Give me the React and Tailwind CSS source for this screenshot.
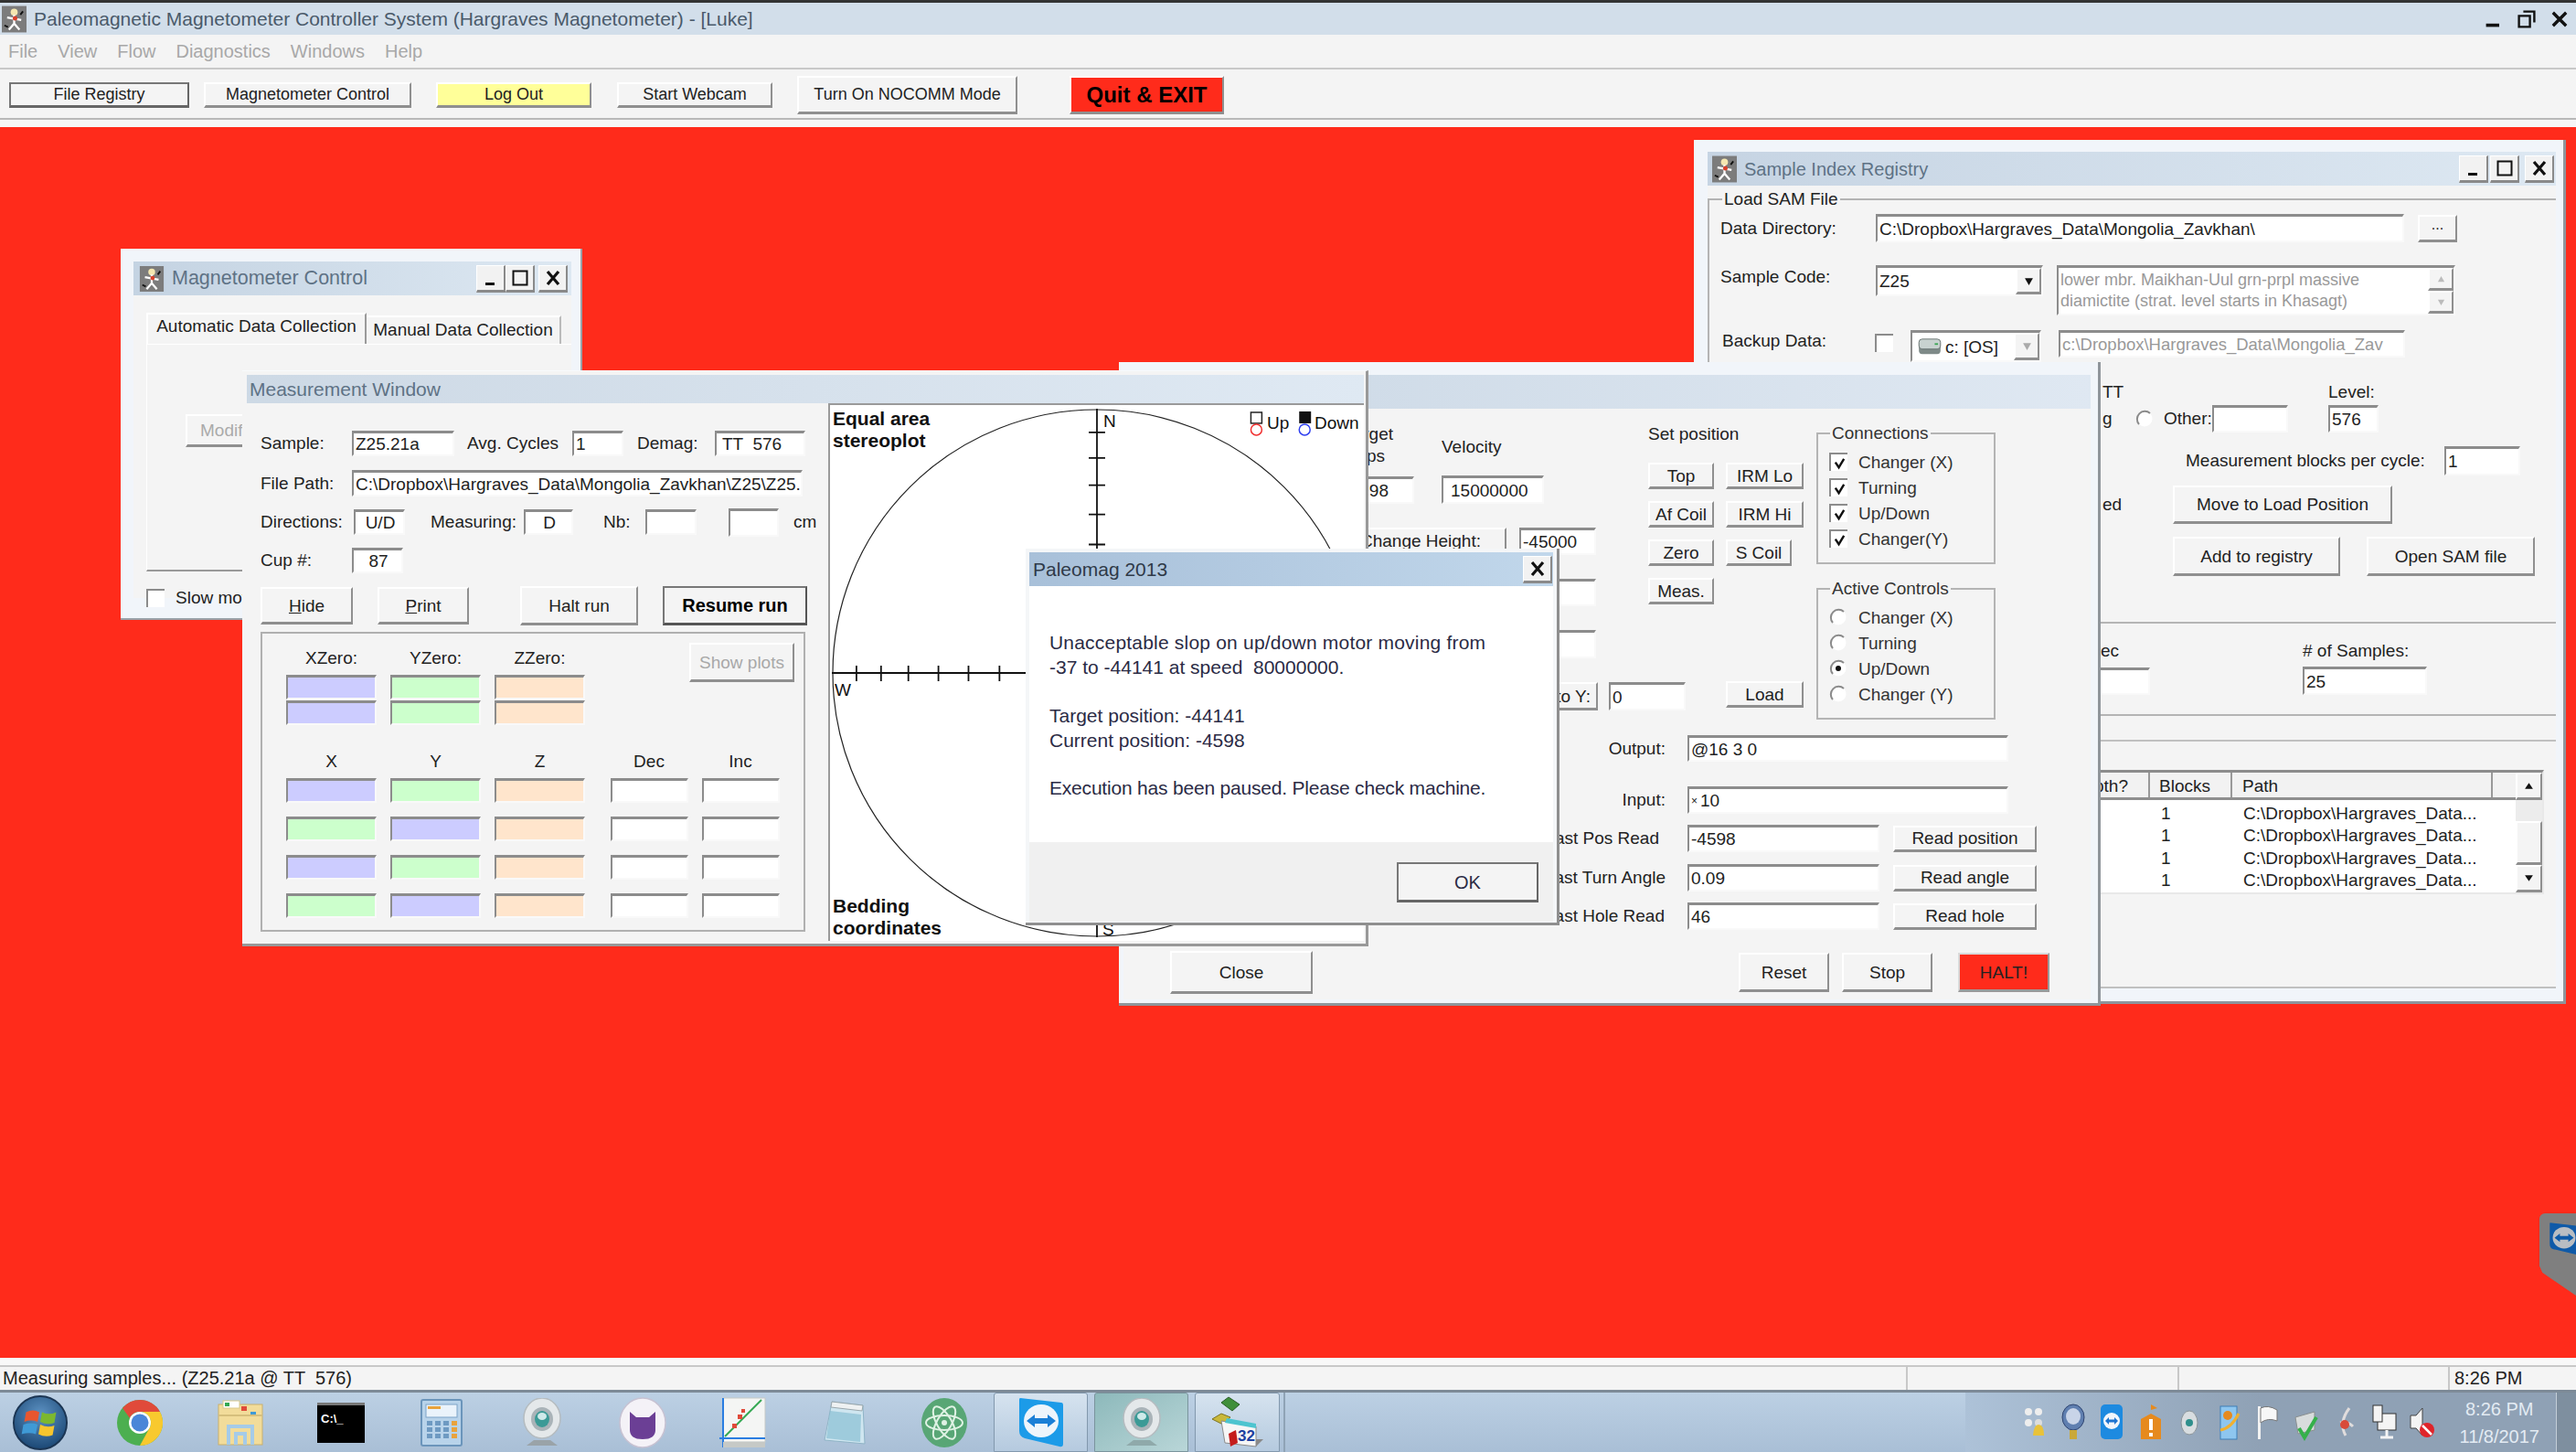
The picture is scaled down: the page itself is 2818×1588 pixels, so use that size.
import React from 'react';
import { twMerge } from 'tailwind-merge';

const Field = ({ className, children }) => (
  <div className={twMerge('flex items-center shrink-0 bg-white border-t-[3px] border-l-2 border-t-[#8c8c8c] border-l-[#8c8c8c] border-r-2 border-b-2 border-r-[#f9f9f9] border-b-[#f9f9f9] overflow-hidden whitespace-pre pl-[2px] text-[19px] leading-none text-[#222]', className)}>
    {children}
  </div>
);

const Btn = ({ className, children }) => (
  <div className={twMerge('flex items-center justify-center shrink-0 bg-[#f4f4f4] border-t-2 border-l-2 border-t-white border-l-white border-r-2 border-b-[3px] border-r-[#8f8f8f] border-b-[#8f8f8f] whitespace-nowrap text-[19px] leading-none text-[#222]', className)}>
    {children}
  </div>
);

const Label = ({ className, children }) => (
  <div className={twMerge('shrink-0 whitespace-nowrap text-[19px] leading-[24px] text-[#222]', className)}>{children}</div>
);

const AppIcon = ({ className }) => (
  <svg viewBox="0 0 28 30" className={className}>
    <rect width="28" height="30" fill="#7c7c7c" />
    <circle cx="14" cy="7" r="4" fill="#f4e7b0" />
    <path d="M14 10 L14 20 L8 27 M14 20 L20 27 M6 13 L22 16" stroke="#fff" strokeWidth="2.4" fill="none" />
    <circle cx="15" cy="14" r="2.6" fill="#d8402a" />
    <path d="M3 22 L7 24 M24 6 L21 10" stroke="#111" strokeWidth="2" />
  </svg>
);

const Caption = ({ kind }) => (
  <div className="flex items-center justify-center w-[32px] h-[30px] bg-[#f2f2f2] border-t border-l border-white border-r-2 border-b-[3px] border-r-[#8a8a8a] border-b-[#8a8a8a]">
    <svg viewBox="0 0 20 20" className="w-[20px] h-[20px]">
      {kind === 'min' && <rect x="4" y="15" width="10" height="3" fill="#111" />}
      {kind === 'max' && <rect x="2.5" y="2.5" width="15" height="15" fill="none" stroke="#111" strokeWidth="2" />}
      {kind === 'close' && <path d="M4 3 L16 17 M16 3 L4 17" stroke="#111" strokeWidth="3.2" />}
    </svg>
  </div>
);

const Check = () => (
  <div className="flex items-center justify-center w-[20px] h-[20px] shrink-0 bg-white border-t-2 border-l-2 border-[#8c8c8c]">
    <svg viewBox="0 0 16 16" className="w-[15px] h-[15px]">
      <path d="M3 7 L7 13 L13 3" stroke="#111" strokeWidth="2.6" fill="none" />
    </svg>
  </div>
);

const Radio = ({ on }) => (
  <svg viewBox="0 0 20 20" className="w-[20px] h-[20px] shrink-0">
    <circle cx="10" cy="10" r="8.5" fill="#fff" />
    <path d="M16 4 A8.5 8.5 0 0 0 4 16" fill="none" stroke="#8a8a8a" strokeWidth="2" />
    {on && <circle cx="10" cy="10" r="3" fill="#111" />}
  </svg>
);

const Group = ({ title, className, children }) => (
  <div className={twMerge('relative border-2 border-[#b4b4b4] w-[196px] h-[144px] flex flex-col pt-[20px] pl-[12px] gap-[8px]', className)}>
    <div className="absolute -top-[13px] left-[13px] bg-[#f4f4f4] px-[2px] text-[19px] leading-[24px] text-[#333]">{title}</div>
    {children}
  </div>
);

const ToggleRow = ({ control, text }) => (
  <div className="flex items-center h-[20px] gap-[12px] text-[19px] leading-none text-[#333]">
    {control}
    <span>{text}</span>
  </div>
);

const Magnetometer = () => (
  <div className="absolute left-[132px] top-[272px] z-10 w-[505px] h-[406px] bg-[#f1f5fa] border-r-2 border-b-2 border-[#9aa1a8] pl-[14px] pr-[10px] pt-[14px]">
    <div className="flex items-center h-[37px] bg-gradient-to-r from-[#c4d3e2] to-[#dde8f2] pl-[6px] pr-[4px]">
      <AppIcon className="w-[28px] h-[28px]" />
      <span className="ml-[8px] text-[21.5px] leading-none text-[#5e7285]">Magnetometer Control</span>
      <div className="ml-auto flex">
        <Caption kind="min" />
        <Caption kind="max" />
        <div className="w-[4px]" />
        <Caption kind="close" />
      </div>
    </div>
    <div className="bg-[#f4f4f4] h-[331px] pl-[14px] pt-[19px]">
      <div className="flex items-end border-b border-white">
        <div className="flex items-center justify-center w-[241px] h-[34px] pb-[5px] border-t-2 border-l-2 border-white border-r-2 border-r-[#9a9a9a] text-[19px] text-[#222]">Automatic Data Collection</div>
        <div className="flex items-center justify-center w-[213px] h-[31px] border-t-2 border-white border-r-2 border-r-[#bbb] text-[19px] text-[#222]">Manual Data Collection</div>
      </div>
      <div className="w-[400px] h-[248px] border-b-2 border-b-[#999] border-l border-l-white pl-[42px] pt-[76px]">
        <Btn className="w-[100px] h-[36px] text-[#aaa] justify-start pl-[14px]">Modify</Btn>
      </div>
      <div className="flex items-center mt-[17px] gap-[12px]">
        <div className="w-[20px] h-[20px] bg-white border-t-2 border-l-2 border-[#8c8c8c]" />
        <Label>Slow motion</Label>
      </div>
    </div>
  </div>
);

const zeroRows = [0, 1];
const dataRows = [
  ['bg-[#ccccff]', 'bg-[#ccffcc]', 'bg-[#ffe5cc]'],
  ['bg-[#ccffcc]', 'bg-[#ccccff]', 'bg-[#ffe5cc]'],
  ['bg-[#ccccff]', 'bg-[#ccffcc]', 'bg-[#ffe5cc]'],
  ['bg-[#ccffcc]', 'bg-[#ccccff]', 'bg-[#ffe5cc]'],
];

const Stereoplot = () => {
  const vTicks = [30, 58, 88, 120, 153];
  const hTicks = [29, 56, 86, 119, 152, 186];
  return (
    <div className="relative w-[586px] h-[588px] bg-white border-t-2 border-l-2 border-[#9a9a9a] text-[#111]">
      <svg viewBox="0 0 586 588" className="w-[584px] h-[586px]">
        <ellipse cx="293" cy="294" rx="290" ry="289" fill="none" stroke="#222" strokeWidth="1.2" />
        <path d="M293 4 V584 M2 294 H584" stroke="#111" strokeWidth="1.8" />
        {vTicks.map((y) => <path key={y} d={`M284 ${y} H302 M284 ${588 - y} H302`} stroke="#111" strokeWidth="1.8" />)}
        {hTicks.map((x) => <path key={x} d={`M${x} 286 V303 M${586 - x} 286 V303`} stroke="#111" strokeWidth="1.8" />)}
        <rect x="462" y="8" width="12" height="12" fill="#fff" stroke="#222" strokeWidth="1.5" />
        <circle cx="468" cy="27" r="6" fill="#fff" stroke="#f03030" strokeWidth="1.5" />
        <rect x="515" y="7" width="13" height="13" fill="#111" />
        <circle cx="521" cy="27" r="6" fill="#fff" stroke="#3040f0" strokeWidth="1.5" />
      </svg>
      <div className="absolute left-[3px] top-[3px] font-bold text-[21px] leading-[24px]">Equal area<br />stereoplot</div>
      <div className="absolute left-[3px] bottom-[2px] font-bold text-[21px] leading-[24px]">Bedding<br />coordinates</div>
      <div className="absolute left-[299px] top-[6px] text-[19px] leading-[24px]">N</div>
      <div className="absolute left-[5px] top-[300px] text-[19px] leading-[24px]">W</div>
      <div className="absolute left-[298px] bottom-[0px] text-[19px] leading-[24px]">S</div>
      <div className="absolute left-[478px] top-[8px] text-[19px] leading-[24px]">Up</div>
      <div className="absolute left-[530px] top-[8px] text-[19px] leading-[24px]">Down</div>
    </div>
  );
};

const Measurement = () => (
  <div className="absolute left-[265px] top-[405px] z-30 w-[1232px] h-[630px] bg-[#f4f4f4] border-t border-[#f8fafc] border-r-[3px] border-b-[3px] border-r-[#999] border-b-[#999] pl-[5px] pt-[4px]">
    <div className="flex items-center h-[31px] w-[1222px] bg-gradient-to-r from-[#cdd9e5] to-[#dfe9f3] pl-[3px] text-[21px] leading-none text-[#5e7285]">Measurement Window</div>
    <div className="flex">
      <div className="w-[636px] pl-[15px] pt-[30px]">
        <div className="flex items-center h-[28px]">
          <Label className="w-[100px]">Sample:</Label>
          <Field className="w-[112px] h-[28px]">Z25.21a</Field>
          <Label className="ml-[14px] w-[115px]">Avg. Cycles</Label>
          <Field className="w-[56px] h-[28px]">1</Field>
          <Label className="ml-[15px] w-[85px]">Demag:</Label>
          <Field className="w-[99px] h-[28px] pl-[6px]">TT  576</Field>
        </div>
        <div className="flex items-center h-[29px] mt-[15px]">
          <Label className="w-[100px]">File Path:</Label>
          <Field className="w-[493px] h-[29px]">C:\Dropbox\Hargraves_Data\Mongolia_Zavkhan\Z25\Z25.21a</Field>
        </div>
        <div className="flex items-center h-[28px] mt-[14px]">
          <Label className="w-[102px]">Directions:</Label>
          <Field className="w-[56px] h-[28px] justify-center">U/D</Field>
          <Label className="ml-[28px] w-[102px]">Measuring:</Label>
          <Field className="w-[54px] h-[28px] justify-center">D</Field>
          <Label className="ml-[33px] w-[46px]">Nb:</Label>
          <Field className="w-[56px] h-[28px]" />
          <Field className="ml-[35px] w-[55px] h-[31px]" />
          <Label className="ml-[16px]">cm</Label>
        </div>
        <div className="flex items-center h-[28px] mt-[14px]">
          <Label className="w-[100px]">Cup #:</Label>
          <Field className="w-[56px] h-[28px] justify-center">87</Field>
        </div>
        <div className="flex items-center h-[43px] mt-[14px]">
          <Btn className="w-[101px] h-[41px]"><span><u>H</u>ide</span></Btn>
          <Btn className="ml-[27px] w-[100px] h-[41px]"><span><u>P</u>rint</span></Btn>
          <Btn className="ml-[56px] w-[129px] h-[43px]">Halt run</Btn>
          <Btn className="ml-[27px] w-[158px] h-[43px] text-[20px] font-bold text-black border-t-[#777] border-l-[#777] border-r-[#555] border-b-[#555]">Resume run</Btn>
        </div>
        <div className="w-[596px] h-[328px] mt-[7px] border-2 border-[#b0b0b0] pl-[26px] pr-[10px] pt-[15px] flex flex-col text-[#222]">
          <div className="flex">
            <div>
              <div className="flex gap-[15px] text-[19px] leading-[24px]">
                {['XZero:', 'YZero:', 'ZZero:'].map((t) => <div key={t} className="w-[99px] text-center">{t}</div>)}
              </div>
              <div className="flex flex-col mt-[6px] gap-[1px]">
                {zeroRows.map((r) => (
                  <div key={r} className="flex gap-[15px]">
                    <Field className="w-[99px] h-[27px] bg-[#ccccff]" />
                    <Field className="w-[99px] h-[27px] bg-[#ccffcc]" />
                    <Field className="w-[99px] h-[27px] bg-[#ffe5cc]" />
                  </div>
                ))}
              </div>
            </div>
            <Btn className="ml-[114px] -mt-[5px] w-[115px] h-[43px] text-[#a8a8a8]">Show plots</Btn>
          </div>
          <div className="flex mt-[28px] text-[19px] leading-[24px]">
            <div className="w-[114px] text-center pr-[15px]">X</div>
            <div className="w-[114px] text-center pr-[15px]">Y</div>
            <div className="w-[114px] text-center pr-[15px]">Z</div>
            <div className="ml-[13px] w-[100px] text-center pr-[16px]">Dec</div>
            <div className="w-[84px] text-center">Inc</div>
          </div>
          <div className="flex flex-col mt-[6px] gap-[15px]">
            {dataRows.map((row, i) => (
              <div key={i} className="flex gap-[15px]">
                <Field className={twMerge('w-[99px] h-[27px]', row[0])} />
                <Field className={twMerge('w-[99px] h-[27px]', row[1])} />
                <Field className={twMerge('w-[99px] h-[27px]', row[2])} />
                <Field className="ml-[13px] w-[85px] h-[27px]" />
                <Field className="w-[85px] h-[27px]" />
              </div>
            ))}
          </div>
        </div>
      </div>
      <Stereoplot />
    </div>
  </div>
);

const Dialog = () => (
  <div className="absolute left-[1122px] top-[600px] z-40 w-[584px] h-[412px] bg-[#f4f6f8] border-r-[3px] border-b-[3px] border-[#8f8f8f] px-[4px] pt-[4px]">
    <div className="flex items-center h-[37px] bg-gradient-to-r from-[#a8c0d9] to-[#c1d7eb] pl-[4px] pr-[1px] text-[21px] leading-none text-[#2f3a48]">
      <span>Paleomag 2013</span>
      <div className="ml-auto"><Caption kind="close" /></div>
    </div>
    <div className="h-[280px] bg-white pl-[22px] pt-[49px] whitespace-pre text-[21px] leading-[26.5px] text-[#2b2b45]">
      <div className="tracking-[0.2px]">Unacceptable slop on up/down motor moving from</div>
      <div>-37 to -44141 at speed  80000000.</div>
      <div className="mt-[27px]">Target position: -44141</div>
      <div>Current position: -4598</div>
      <div className="mt-[26px] tracking-[-0.2px]">Execution has been paused. Please check machine.</div>
    </div>
    <div className="flex justify-end h-[87px] bg-[#f0f0f0] pr-[16px] pt-[22px]">
      <Btn className="w-[155px] h-[44px] text-[20px] border-t-[#777] border-l-[#777] border-r-[#666] border-b-[#666] text-[#2b2b45]">OK</Btn>
    </div>
  </div>
);

const setPos = [
  [['Top', 'w-[72px]'], ['IRM Lo', 'w-[85px]']],
  [['Af Coil', 'w-[72px]'], ['IRM Hi', 'w-[85px]']],
  [['Zero', 'w-[72px]'], ['S Coil', 'w-[72px]']],
  [['Meas.', 'w-[72px]']],
];

const Motor = () => (
  <div className="absolute left-[1224px] top-[396px] z-20 w-[1074px] h-[704px] bg-[#f1f5fa] border-r-[3px] border-b-[3px] border-[#8f959b] pl-[5px] pr-[8px] pt-[14px]">
    <div className="h-[37px] bg-gradient-to-r from-[#cbd8e5] to-[#dfe8f2]" />
    <div className="h-[646px] bg-[#f4f4f4]">
      <div className="flex">
        <div className="w-[574px]">
          <div className="flex pt-[16px]">
            <div className="w-[318px]">
              <Label className="text-right pr-[23px]">Target</Label>
              <Label className="text-right pr-[32px]">Steps</Label>
              <Field className="mt-[10px] w-[318px] h-[30px] justify-end pr-[26px]">98</Field>
            </div>
            <div className="ml-[30px] pt-[14px]">
              <Label>Velocity</Label>
              <Field className="mt-[19px] w-[112px] h-[31px] pl-[8px]">15000000</Field>
            </div>
          </div>
          <div className="flex mt-[26px]">
            <div className="w-[419px] h-[30px] border-t-2 border-white border-r-2 border-r-[#8f8f8f] pr-[26px] text-right text-[19px] leading-[26px] text-[#222]">Change Height:</div>
            <Field className="ml-[14px] w-[84px] h-[30px]">-45000</Field>
          </div>
          <Field className="mt-[26px] ml-[433px] w-[84px] h-[30px]" />
          <Field className="mt-[26px] ml-[433px] w-[84px] h-[31px]" />
          <div className="flex mt-[26px] w-[620px]">
            <div className="flex justify-end w-[519px]">
              <Btn className="w-[110px] h-[31px] justify-end pr-[6px]">Goto Y:</Btn>
            </div>
            <Field className="ml-[12px] w-[84px] h-[31px]">0</Field>
          </div>
        </div>
        <div className="w-[184px] pt-[16px]">
          <Label>Set position</Label>
          <div className="flex flex-col mt-[19px] gap-[13px]">
            {setPos.map((row, i) => (
              <div key={i} className="flex gap-[13px]">
                {row.map(([text, w]) => <Btn key={text} className={twMerge('h-[29px]', w)}>{text}</Btn>)}
              </div>
            ))}
          </div>
          <Btn className="ml-[85px] mt-[84px] w-[85px] h-[29px]">Load</Btn>
        </div>
        <div className="pt-[26px]">
          <Group title="Connections">
            {['Changer (X)', 'Turning', 'Up/Down', 'Changer(Y)'].map((t) => <ToggleRow key={t} control={<Check />} text={t} />)}
          </Group>
          <Group title="Active Controls" className="mt-[26px]">
            {['Changer (X)', 'Turning', 'Up/Down', 'Changer (Y)'].map((t) => <ToggleRow key={t} control={<Radio on={t === 'Up/Down'} />} text={t} />)}
          </Group>
        </div>
      </div>
      <div className="flex items-center mt-[17px]">
        <Label className="w-[593px] text-right">Output:</Label>
        <Field className="ml-[24px] w-[351px] h-[29px]">@16 3 0</Field>
      </div>
      <div className="flex items-center mt-[27px]">
        <Label className="w-[593px] text-right">Input:</Label>
        <Field className="ml-[24px] w-[351px] h-[30px]"><span className="text-[12px] mr-[3px]">×</span>10</Field>
      </div>
      <div className="flex items-center mt-[12px]">
        <Label className="w-[586px] text-right">Last Pos Read</Label>
        <Field className="ml-[31px] w-[210px] h-[30px]">-4598</Field>
        <Btn className="ml-[15px] w-[157px] h-[29px]">Read position</Btn>
      </div>
      <div className="flex items-center mt-[13px]">
        <Label className="w-[593px] text-right">Last Turn Angle</Label>
        <Field className="ml-[24px] w-[210px] h-[30px]">0.09</Field>
        <Btn className="ml-[15px] w-[157px] h-[29px]">Read angle</Btn>
      </div>
      <div className="flex items-center mt-[12px]">
        <Label className="w-[592px] text-right">Last Hole Read</Label>
        <Field className="ml-[25px] w-[210px] h-[30px]">46</Field>
        <Btn className="ml-[15px] w-[157px] h-[29px]">Read hole</Btn>
      </div>
      <div className="flex items-center mt-[23px]">
        <Btn className="ml-[51px] w-[156px] h-[47px]">Close</Btn>
        <Btn className="ml-[466px] w-[99px] h-[43px]">Reset</Btn>
        <Btn className="ml-[14px] w-[99px] h-[43px]">Stop</Btn>
        <Btn className="ml-[28px] w-[100px] h-[43px] bg-[#ff2b1b] border-[#d9d9d9] border-r-[#9a9a9a] border-b-[#9a9a9a]">HALT!</Btn>
      </div>
    </div>
  </div>
);

const ComboArrow = ({ dim }) => (
  <Btn className="w-[28px] h-full ml-auto">
    <svg viewBox="0 0 10 10" className="w-[11px] h-[11px]"><path d="M1 2 H9 L5 9 Z" fill={dim ? '#aaa' : '#111'} /></svg>
  </Btn>
);

const tableRows = [0, 1, 2, 3];

const SampleRegistry = () => (
  <div className="absolute left-[1853px] top-[153px] z-0 w-[954px] h-[945px] bg-[#f1f5fa] border-r-[3px] border-b-[3px] border-[#8f959b] pl-[15px] pr-[8px] pt-[13px]">
    <div className="flex items-center h-[37px] bg-gradient-to-r from-[#c6d4e3] to-[#dde8f2] pl-[5px] pr-[2px]">
      <AppIcon className="w-[27px] h-[30px]" />
      <span className="ml-[8px] text-[20px] leading-none text-[#5e7285]">Sample Index Registry</span>
      <div className="ml-auto flex gap-[2px]">
        <Caption kind="min" />
        <Caption kind="max" />
        <div className="w-[2px]" />
        <Caption kind="close" />
      </div>
    </div>
    <div className="h-[878px] bg-[#f4f4f4] pt-[14px]">
      <div className="relative h-[465px] border-t-2 border-l-2 border-b-2 border-[#b4b4b4]">
        <div className="absolute -top-[13px] left-[14px] bg-[#f4f4f4] px-[2px] text-[19px] leading-[24px] text-[#222]">Load SAM File</div>
        <div className="flex items-center ml-[12px] mt-[15px]">
          <Label className="w-[170px]">Data Directory:</Label>
          <Field className="w-[578px] h-[31px]">C:\Dropbox\Hargraves_Data\Mongolia_Zavkhan\</Field>
          <Btn className="ml-[15px] w-[43px] h-[30px] items-end pb-[4px] text-[16px]">...</Btn>
        </div>
        <div className="flex items-start ml-[12px] mt-[25px]">
          <Label className="w-[170px] mt-[1px]">Sample Code:</Label>
          <Field className="w-[183px] h-[34px] pr-0">Z25<ComboArrow /></Field>
          <Field className="ml-[15px] w-[436px] h-[55px] pr-0 text-[18px] leading-[23px] text-[#999] items-stretch">
            <div className="pt-[2px] whitespace-normal w-[400px]">lower mbr. Maikhan-Uul grn-prpl massive diamictite (strat. level starts in Khasagt)</div>
            <div className="ml-auto flex flex-col w-[28px]">
              <Btn className="h-[25px] w-[28px]"><svg viewBox="0 0 10 10" className="w-[9px] h-[9px]"><path d="M1 8 H9 L5 1 Z" fill="#bbb" /></svg></Btn>
              <Btn className="h-[25px] w-[28px]"><svg viewBox="0 0 10 10" className="w-[9px] h-[9px]"><path d="M1 2 H9 L5 9 Z" fill="#bbb" /></svg></Btn>
            </div>
          </Field>
        </div>
        <div className="flex items-start ml-[14px] mt-[16px]">
          <Label className="w-[167px]">Backup Data:</Label>
          <div className="w-[20px] h-[20px] mt-[4px] bg-white border-t-2 border-l-2 border-[#8c8c8c]" />
          <Field className="ml-[19px] w-[143px] h-[35px] pr-0 pl-[6px]">
            <svg viewBox="0 0 28 22" className="w-[26px] h-[20px] mr-[4px]">
              <rect x="1" y="4" width="26" height="16" rx="4" fill="#7e8a88" />
              <rect x="1" y="2" width="26" height="12" rx="4" fill="#c8d2d0" stroke="#66706e" />
              <rect x="20" y="7" width="4" height="2" fill="#3aa655" />
            </svg>
            <span>c: [OS]</span>
            <ComboArrow dim />
          </Field>
          <Field className="ml-[19px] w-[379px] h-[30px] text-[#999] text-[18.5px]">c:\Dropbox\Hargraves_Data\Mongolia_Zav</Field>
        </div>
        <div className="ml-[430px] mt-[21px] flex">
          <div className="w-[247px]">
            <Label>TT</Label>
            <div className="flex items-center mt-[2px] h-[30px]">
              <Label className="w-[36px]">g</Label>
              <Radio />
              <Label className="ml-[11px] w-[53px]">Other:</Label>
              <Field className="w-[83px] h-[30px]" />
            </div>
          </div>
          <div>
            <Label>Level:</Label>
            <Field className="mt-[2px] w-[55px] h-[30px]">576</Field>
          </div>
        </div>
        <div className="ml-[521px] mt-[15px] flex items-center">
          <Label className="w-[283px]">Measurement blocks per cycle:</Label>
          <Field className="w-[83px] h-[32px]">1</Field>
        </div>
        <div className="ml-[430px] mt-[11px] flex items-center">
          <Label className="w-[77px]">ed</Label>
          <Btn className="w-[240px] h-[42px]">Move to Load Position</Btn>
        </div>
        <div className="ml-[507px] mt-[14px] flex gap-[29px]">
          <Btn className="w-[183px] h-[43px]">Add to registry</Btn>
          <Btn className="w-[184px] h-[43px]">Open SAM file</Btn>
        </div>
      </div>
      <div className="flex h-[101px] border-b-2 border-[#b4b4b4] pl-[332px] pt-[18px]">
        <div className="w-[152px]">
          <Label className="text-right pr-[34px]">Dec</Label>
          <Field className="mt-[6px] w-[152px] h-[30px]" />
        </div>
        <div className="ml-[167px]">
          <Label># of Samples:</Label>
          <Field className="mt-[5px] w-[136px] h-[31px]">25</Field>
        </div>
      </div>
      <div className="mt-[26px] h-[272px] border-t-2 border-b-2 border-[#c0c0c0] pl-[332px] pt-[31px]">
        <div className="w-[583px] h-[136px] bg-white border-t-[3px] border-l-2 border-[#8c8c8c] border-r-2 border-r-[#e8e8e8] border-b-2 border-b-[#e8e8e8] flex text-[#222]">
          <div className="flex-1">
            <div className="flex h-[30px] bg-[#f2f2f2] border-b-[3px] border-[#8f8f8f] text-[19px] leading-[29px]">
              <div className="w-[150px] text-right pr-[22px] border-r-2 border-[#999]">Depth?</div>
              <div className="w-[90px] pl-[10px] border-r-2 border-[#999]">Blocks</div>
              <div className="w-[285px] pl-[11px] border-r-2 border-[#999]">Path</div>
              <div className="flex-1" />
            </div>
            <div className="flex flex-col pt-[2px]">
              {tableRows.map((r) => (
                <div key={r} className="flex h-[24.5px] items-center text-[19px] leading-none">
                  <div className="ml-[162px] w-[90px]">1</div>
                  <div>C:\Dropbox\Hargraves_Data...</div>
                </div>
              ))}
            </div>
          </div>
          <div className="flex flex-col w-[29px]">
            <Btn className="w-[29px] h-[30px]"><svg viewBox="0 0 10 10" className="w-[11px] h-[11px]"><path d="M1 8 H9 L5 2 Z" fill="#111" /></svg></Btn>
            <div className="h-[23px] bg-[#ececec]" />
            <Btn className="w-[29px] h-[48px]" />
            <Btn className="w-[29px] h-[30px]"><svg viewBox="0 0 10 10" className="w-[11px] h-[11px]"><path d="M1 2 H9 L5 8 Z" fill="#111" /></svg></Btn>
          </div>
        </div>
      </div>
    </div>
  </div>
);

const Orb = () => (
  <svg viewBox="0 0 64 64" className="w-[64px] h-[62px]">
    <defs>
      <radialGradient id="orb" cx="50%" cy="35%" r="70%"><stop offset="0" stopColor="#5e93c4" /><stop offset="1" stopColor="#16426f" /></radialGradient>
    </defs>
    <circle cx="32" cy="32" r="30" fill="url(#orb)" stroke="#1b3553" strokeWidth="2" />
    <path d="M16 20 Q24 16 31 20 L29 31 Q22 28 14 31 Z" fill="#e8562e" />
    <path d="M34 20 Q42 24 50 20 L48 32 Q40 35 32 31 Z" fill="#7cb82f" />
    <path d="M13 34 Q22 31 29 34 L27 45 Q20 42 11 45 Z" fill="#3f9ad6" />
    <path d="M32 34 Q40 38 48 35 L46 46 Q38 49 30 45 Z" fill="#f7c52d" />
  </svg>
);

const Chrome = () => (
  <svg viewBox="0 0 52 52" className="w-[52px] h-[52px]">
    <circle cx="26" cy="26" r="25" fill="#4caf50" />
    <path d="M26 1 A25 25 0 0 1 48 14 H26 A12 12 0 0 0 15 21 L7 10 A25 25 0 0 1 26 1 Z" fill="#e04a3a" />
    <path d="M48 14 A25 25 0 0 1 26 51 L37 31 A12 12 0 0 0 26 14 Z" fill="#f8c92e" />
    <circle cx="26" cy="26" r="12" fill="#fff" />
    <circle cx="26" cy="26" r="9.5" fill="#4a86d8" />
  </svg>
);

const Folder = () => (
  <svg viewBox="0 0 54 52" className="w-[54px] h-[52px]">
    <rect x="3" y="6" width="48" height="44" fill="#f2dc9a" stroke="#c9b06c" />
    <rect x="8" y="2" width="18" height="8" fill="#fff" stroke="#d8c88a" />
    <rect x="10" y="4" width="5" height="4" fill="#35a853" />
    <rect x="28" y="8" width="6" height="5" fill="#e04a3a" />
    <rect x="38" y="14" width="6" height="5" fill="#3f9ad6" />
    <path d="M3 18 H51" stroke="#d6bf7c" strokeWidth="2" />
    <path d="M14 50 V30 H40 V50 M22 50 V38 H32 V50" fill="none" stroke="#a5cbe8" strokeWidth="4" />
  </svg>
);

const Cmd = () => (
  <div className="w-[52px] h-[44px] bg-black border-t-[3px] border-[#777] pl-[4px] pt-[8px] text-[13px] leading-none font-bold text-white">C:\_</div>
);

const Calc = () => (
  <svg viewBox="0 0 46 52" className="w-[46px] h-[52px]">
    <rect x="1" y="1" width="44" height="50" rx="2" fill="#b8d3ea" stroke="#6b95bb" strokeWidth="2" />
    <rect x="6" y="6" width="34" height="14" fill="#eaf3fb" stroke="#7da4c8" />
    <rect x="8" y="8" width="14" height="3" fill="#e8a33d" />
    {[24, 31, 38].map((y) => [7, 16, 25, 34].map((x) => <rect key={`${x}-${y}`} x={x} y={y} width="6" height="5" fill={x === 34 ? '#e8a33d' : '#6e9ac2'} />))}
  </svg>
);

const Webcam = ({ stand = '#9aa3a8' }) => (
  <svg viewBox="0 0 50 54" className="w-[50px] h-[54px]">
    <path d="M16 46 L34 46 L42 52 H8 Z" fill={stand} />
    <ellipse cx="25" cy="22" rx="20" ry="22" fill="#e4e8ea" stroke="#b5bcc0" strokeWidth="1.5" />
    <ellipse cx="25" cy="23" rx="12" ry="13" fill="#a9b3b8" />
    <ellipse cx="25" cy="23" rx="8" ry="9" fill="#3b9a96" />
    <ellipse cx="25" cy="20" rx="5" ry="4" fill="#cfeaea" />
  </svg>
);

const Cat = () => (
  <svg viewBox="0 0 52 56" className="w-[52px] h-[56px]">
    <ellipse cx="26" cy="28" rx="25" ry="27" fill="#f4f2f7" stroke="#c7c2d2" strokeWidth="1.5" />
    <path d="M12 16 L19 22 H33 L40 16 V36 Q40 46 26 46 Q12 46 12 36 Z" fill="#6b3f95" />
  </svg>
);

const Plot = () => (
  <svg viewBox="0 0 52 58" className="w-[52px] h-[58px]">
    <rect x="4" y="2" width="46" height="48" fill="#f4f5f4" stroke="#c6c9c6" />
    <path d="M4 2 V56 M0 46 H50" stroke="#2a7de1" strokeWidth="2" />
    <path d="M6 44 L46 4" stroke="#35a853" strokeWidth="2" />
    <rect x="14" y="30" width="5" height="5" fill="#e04a3a" />
    <rect x="20" y="20" width="5" height="5" fill="#e04a3a" />
    <rect x="24" y="14" width="4" height="4" fill="#e04a3a" />
    <rect x="4" y="50" width="46" height="6" fill="#c6c9c6" />
  </svg>
);

const Notepad = () => (
  <svg viewBox="0 0 54 54" className="w-[54px] h-[54px]">
    <path d="M14 4 L48 8 L50 50 L6 46 Z" fill="#cfe6f0" stroke="#8fb4c6" />
    <path d="M14 4 L48 8 L47 14 L13 10 Z" fill="#eef1f2" stroke="#9aa7ad" />
    <path d="M12 14 L46 18 L45 48 L8 44 Z" fill="#7db9cf" opacity="0.6" />
  </svg>
);

const Atom = () => (
  <svg viewBox="0 0 52 56" className="w-[52px] h-[56px]">
    <ellipse cx="26" cy="28" rx="25" ry="27" fill="#58a675" />
    <g fill="none" stroke="#dff2e4" strokeWidth="2">
      <ellipse cx="26" cy="28" rx="20" ry="8" />
      <ellipse cx="26" cy="28" rx="20" ry="8" transform="rotate(60 26 28)" />
      <ellipse cx="26" cy="28" rx="20" ry="8" transform="rotate(120 26 28)" />
    </g>
    <circle cx="26" cy="28" r="3" fill="#dff2e4" />
  </svg>
);

const TeamViewer = ({ className, blue = '#1c9be8', disc = '#eef5fb', arrow = '#1b7fd6' }) => (
  <svg viewBox="0 0 52 58" className={className}>
    <path d="M3 2 L48 7 Q50 7 50 10 V52 Q50 56 46 55 L8 46 Q2 44 2 38 V4 Q2 2 3 2 Z" fill={blue} />
    <ellipse cx="26" cy="27" rx="19" ry="18" fill={disc} />
    <path d="M10 27 L19 20 V24 H33 V20 L42 27 L33 34 V30 H19 V34 Z" fill={arrow} />
  </svg>
);

const Schedule = () => (
  <svg viewBox="0 0 60 60" className="w-[60px] h-[60px]">
    <path d="M12 8 L20 2 L32 10 L24 17 Z" fill="#3f8f3a" stroke="#2b5e28" />
    <path d="M2 26 L12 20 L22 24 L14 32 Z" fill="#c9b83a" stroke="#7d7320" />
    <path d="M12 28 L50 34 L50 56 L16 52 Z" fill="#f6f6f6" stroke="#8a8a8a" />
    <path d="M18 25 L50 31 L50 36 L16 30 Z" fill="#4dc4cf" />
    <text x="30" y="50" fontSize="17" fontWeight="700" fill="#1c3fa0" fontFamily="Liberation Sans">32</text>
    <path d="M20 42 L28 38 L30 52 L22 56 Z" fill="#c41c1c" />
    <path d="M50 48 L58 48 L50 56 Z" fill="#8a8a8a" />
  </svg>
);

const Tray = ({ children }) => (
  <svg viewBox="0 0 30 44" className="w-[30px] h-[44px]">{children}</svg>
);

const trayIcons = [
  <><circle cx="9" cy="10" r="4" fill="#eee" /><circle cx="20" cy="10" r="4" fill="#eee" /><circle cx="9" cy="22" r="4" fill="#eee" /><circle cx="20" cy="22" r="4" fill="#ddd" /><path d="M14 36 Q15 24 20 24 Q26 24 26 36 Z" fill="#e8c23a" /></>,
  <><ellipse cx="15" cy="16" rx="12" ry="14" fill="#5f7fb0" stroke="#2f4470" /><ellipse cx="15" cy="15" rx="8" ry="9" fill="#c8d4e8" /><rect x="11" y="30" width="8" height="10" fill="#c9a83a" /></>,
  <><rect x="3" y="2" width="24" height="38" rx="5" fill="#1d8ae0" /><circle cx="15" cy="20" r="9" fill="#f2f6fb" /><path d="M8 20 L12 16 V18.5 H18 V16 L22 20 L18 24 V21.5 H12 V24 Z" fill="#1d74d0" /></>,
  <><path d="M4 40 V18 L15 12 L26 18 V40 Z" fill="#e68a1e" /><rect x="13" y="18" width="4" height="12" fill="#fff" /><rect x="13" y="33" width="4" height="4" fill="#fff" /><path d="M15 12 V2 L22 6 L15 8" fill="#e68a1e" /></>,
  <><ellipse cx="15" cy="22" rx="9" ry="13" fill="#d8dde0" stroke="#8b9499" /><circle cx="15" cy="22" r="4" fill="#2f8f8c" /></>,
  <><rect x="6" y="4" width="18" height="36" fill="#8ec6ef" stroke="#3c7fb8" /><circle cx="14" cy="14" r="5" fill="#e68a1e" /><path d="M6 30 Q18 28 26 12" stroke="#f0b030" strokeWidth="3" fill="none" /></>,
  <><rect x="5" y="4" width="3" height="36" fill="#f2f2f2" /><path d="M8 6 Q16 2 26 8 V20 Q16 16 8 22 Z" fill="#f7f7f7" stroke="#777" /></>,
  <><path d="M3 16 L24 10 V30 L6 34 Z" fill="#d8dcdc" stroke="#8a8f8f" /><path d="M7 28 L13 38 L26 16" stroke="#35b04a" strokeWidth="4" fill="none" /></>,
  <><path d="M20 6 Q8 22 16 36 M10 22 Q18 20 24 26" stroke="#e0dcdc" strokeWidth="3" fill="none" /><circle cx="15" cy="24" r="5" fill="#d84a3a" /></>,
  <><rect x="8" y="12" width="20" height="18" fill="#f4f4f4" stroke="#333" /><rect x="3" y="3" width="10" height="18" fill="#f4f4f4" stroke="#333" /><path d="M18 30 V38 M11 38 H25" stroke="#f4f4f4" strokeWidth="3" /></>,
  <><path d="M2 14 H8 L15 6 V36 L8 28 H2 Z" fill="#f4f4f4" stroke="#444" /><circle cx="20" cy="30" r="8" fill="#e0242a" /><path d="M15 25 L25 35" stroke="#fff" strokeWidth="2.5" /></>,
];

const pinned = [<Chrome key="a" />, <Folder key="b" />, <Cmd key="c" />, <Calc key="d" />, <Webcam key="e" />, <Cat key="f" />, <Plot key="g" />, <Notepad key="h" />, <Atom key="i" />];

const Taskbar = () => (
  <div className="flex h-[68px] border-t-[3px] border-[#7d8a97] bg-gradient-to-b from-[#bcd0e4] to-[#a9bfd6]">
    <div className="flex items-center justify-center w-[98px] pr-[11px]"><Orb /></div>
    {pinned.map((icon, i) => (
      <div key={i} className="flex items-center justify-center w-[110px]">{icon}</div>
    ))}
    <div className="flex items-center justify-center w-[103px] ml-[-1px] rounded-t-[3px] border border-[#8298ad] bg-gradient-to-b from-[#d6e3ef] to-[#b5cadf]">
      <TeamViewer className="w-[52px] h-[58px]" />
    </div>
    <div className="flex items-center justify-center w-[103px] ml-[7px] rounded-t-[3px] border border-[#7a949d] bg-gradient-to-br from-[#8db9bb] to-[#b9d6d8]"><Webcam stand="#8fa9aa" /></div>
    <div className="flex items-center justify-center w-[93px] ml-[7px] rounded-t-[3px] border border-[#8298ad] bg-gradient-to-b from-[#d6e3ef] to-[#b5cadf]"><Schedule /></div>
    <div className="w-[2px] ml-[4px] bg-[#8fa3b6]" />
    <div className="flex-1" />
    <div className="flex items-center w-[646px] bg-gradient-to-r from-[#adc2d8] via-[#8fa1b5] to-[#8fa1b5] pl-[54px]">
      {trayIcons.map((icon, i) => (
        <div key={i} className="flex items-center justify-center w-[42.5px]"><Tray>{icon}</Tray></div>
      ))}
      <div className="ml-auto pr-[18px] text-center text-[20px] leading-[30px] text-[#e3ebf3]">
        8:26 PM<br />11/8/2017
      </div>
    </div>
    <div className="w-[22px] bg-[#7e8f9f] border-l border-[#c4ced8]" />
  </div>
);

export default function App() {
  return (
    <div className="relative flex flex-col w-[2818px] h-[1588px] overflow-hidden bg-[#ff2b1b] font-['Liberation_Sans',Arial,sans-serif]">
      <div className="h-[3px] bg-[#333]" />
      <div className="flex items-center h-[35px] bg-[#d2deea] pl-[2px] text-[21px] leading-none text-[#4a5a6a]">
        <AppIcon className="w-[27px] h-[30px]" />
        <span className="ml-[8px]">Paleomagnetic Magnetometer Controller System (Hargraves Magnetometer) - [Luke]</span>
        <div className="ml-auto flex items-center pr-[6px] gap-[12px]">
          {['min', 'max', 'close'].map((k) => (
            <svg key={k} viewBox="0 0 20 20" className="w-[24px] h-[24px]">
              {k === 'min' && <rect x="3" y="14" width="12" height="3" fill="#111" />}
              {k === 'max' && <path d="M7 3 H17 V13 M3 7 H13 V17 H3 Z" fill="none" stroke="#111" strokeWidth="2" />}
              {k === 'close' && <path d="M4 4 L16 16 M16 4 L4 16" stroke="#111" strokeWidth="2.8" />}
            </svg>
          ))}
        </div>
      </div>
      <div className="flex items-center h-[38px] bg-[#f4f4f4] border-b-2 border-[#c8c8c8] pl-[9px] gap-[22px] text-[20px] leading-none text-[#a8a8a8]">
        {['File', 'View', 'Flow', 'Diagnostics', 'Windows', 'Help'].map((m) => <span key={m}>{m}</span>)}
      </div>
      <div className="flex items-center h-[55px] bg-[#f4f4f4] pl-[10px] pt-[3px] border-b-2 border-[#b8b8b8]">
        <Btn className="w-[197px] h-[28px] text-[18px] border-t-[#777] border-l-[#777] border-r-[#666] border-b-[#666]">File Registry</Btn>
        <Btn className="ml-[16px] w-[227px] h-[28px] text-[18px]">Magnetometer Control</Btn>
        <Btn className="ml-[27px] w-[170px] h-[28px] text-[18px] bg-[#ffff99]">Log Out</Btn>
        <Btn className="ml-[28px] w-[170px] h-[28px] text-[18px]">Start Webcam</Btn>
        <Btn className="ml-[27px] w-[241px] h-[42px] text-[18px]">Turn On NOCOMM Mode</Btn>
        <Btn className="ml-[57px] w-[169px] h-[42px] bg-[#ff2b1b] text-[24px] font-bold text-black">Quit &amp; EXIT</Btn>
      </div>
      <div className="h-[8px] bg-[#f6f6f6]" />
      <div className="flex-1" />
      <div className="h-[8px] bg-[#f8f8f8]" />
      <div className="flex h-[27px] bg-[#f4f4f4] border-t-2 border-[#c8c8c8] whitespace-pre text-[20px] leading-[24px] text-[#222]">
        <div className="w-[2085px] pl-[3px]">Measuring samples... (Z25.21a @ TT  576)</div>
        <div className="w-[297px] border-l-2 border-[#c8c8c8]" />
        <div className="w-[296px] border-l-2 border-[#c8c8c8]" />
        <div className="w-[109px] border-l-2 border-[#c8c8c8] pl-[5px]">8:26 PM</div>
      </div>
      <Taskbar />

      <SampleRegistry />
      <Magnetometer />
      <Motor />
      <Measurement />
      <Dialog />

      <div className="absolute left-[2778px] top-[1327px] z-10 w-[40px] h-[90px] bg-[#7f7f7f] rounded-tl-[6px] [clip-path:polygon(0_0,100%_0,100%_100%,8%_72%,0_64%)] pl-[9px] pt-[9px]">
        <TeamViewer className="w-[36px] h-[38px]" blue="#0f5aa8" disc="#b9bdc2" arrow="#0f5aa8" />
      </div>
    </div>
  );
}
